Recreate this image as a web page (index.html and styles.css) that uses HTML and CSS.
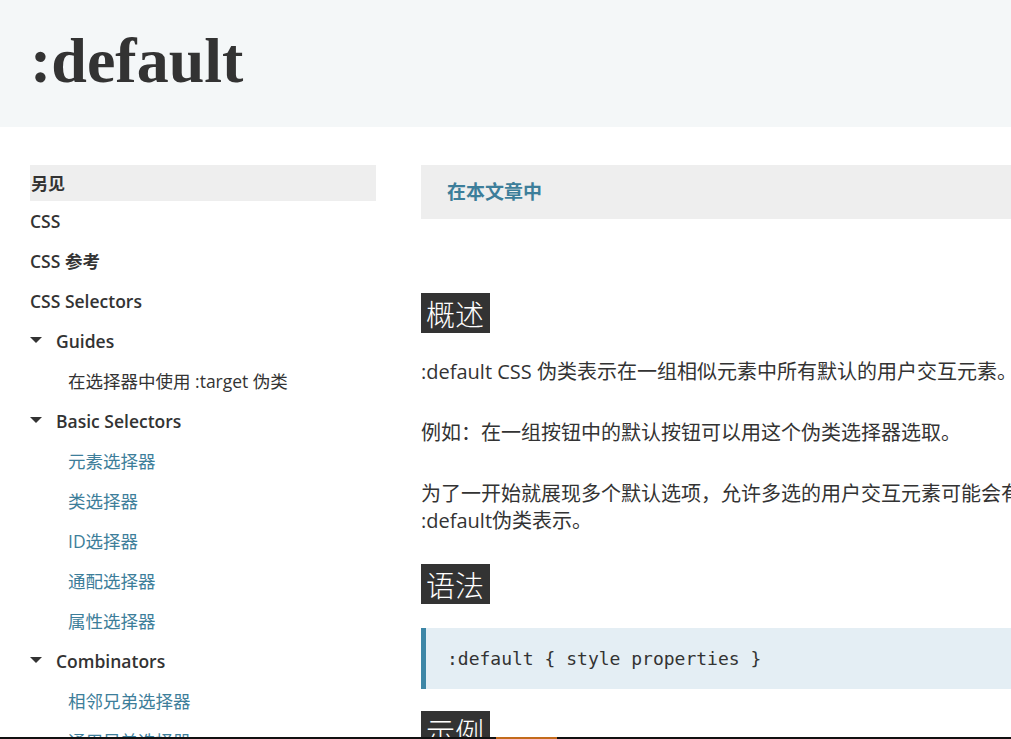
FILE: index.html
```html
<!DOCTYPE html>
<html lang="zh-CN">
<head>
<meta charset="utf-8">
<title>:default</title>
<link rel="stylesheet" href="styles.css">
</head>
<body>
<header class="page-header">
  <h1 class="title">:default</h1>
</header>
<div class="layout">
  <aside class="sidebar">
    <div class="side-heading">另见</div>
    <ul class="side-list">
      <li class="top">CSS</li>
      <li class="top">CSS 参考</li>
      <li class="top">CSS Selectors</li>
      <li class="group"><span class="tri"></span>Guides</li>
      <li class="sub dark">在选择器中使用 :target 伪类</li>
      <li class="group"><span class="tri"></span>Basic Selectors</li>
      <li class="sub">元素选择器</li>
      <li class="sub">类选择器</li>
      <li class="sub">ID选择器</li>
      <li class="sub">通配选择器</li>
      <li class="sub">属性选择器</li>
      <li class="group"><span class="tri"></span>Combinators</li>
      <li class="sub">相邻兄弟选择器</li>
      <li class="sub">通用兄弟选择器</li>
    </ul>
  </aside>
  <main class="content">
    <div class="toc">在本文章中</div>
    <h2 class="sec">概述</h2>
    <p class="para">:default CSS 伪类表示在一组相似元素中所有默认的用户交互元素。</p>
    <p class="para">例如：在一组按钮中的默认按钮可以用这个伪类选择器选取。</p>
    <p class="para">为了一开始就展现多个默认选项，允许多选的用户交互元素可能会有多个项被<wbr>:default伪类表示。</p>
    <h2 class="sec">语法</h2>
    <pre class="code">:default { style properties }</pre>
    <h2 class="sec">示例</h2>
  </main>
</div>
<div class="bottom-bar"><span class="bottom-accent"></span></div>
</body>
</html>
```

FILE: styles.css
```css
html, body {
  margin: 0;
  padding: 0;
}
body {
  font-family: "Open Sans", "Noto Sans CJK SC", sans-serif;
  color: #333;
  background: #fff;
  overflow: hidden;
}
.page-header {
  background: #f4f7f8;
  height: 127px;
  box-sizing: border-box;
  padding: 29px 30px 0;
}
.title {
  margin: 0;
  font-family: "Liberation Serif", serif;
  font-weight: 700;
  font-size: 64px;
  line-height: 64px;
  color: #333;
}
.layout {
  display: flex;
  gap: 45px;
  padding: 38px 0 0 30px;
  overflow: hidden;
}
.sidebar {
  flex: 0 0 346px;
}
.side-heading {
  background: #eee;
  height: 36px;
  line-height: 38px;
  font-weight: 700;
  font-size: 17px;
  padding-left: 1px;
}
.side-list {
  list-style: none;
  margin: 0;
  padding: 0;
}
.side-list li {
  height: 40px;
  line-height: 41px;
  font-size: 17.5px;
  white-space: nowrap;
}
.side-list li.top {
  font-weight: 600;
}
.side-list li.group {
  font-weight: 600;
  display: flex;
  align-items: center;
}
.tri {
  width: 0;
  height: 0;
  border-left: 6px solid transparent;
  border-right: 6px solid transparent;
  border-top: 6px solid #333;
  margin-right: 14px;
  margin-top: -2px;
}
.side-list li.sub {
  padding-left: 38px;
  color: #3d7e9a;
  font-size: 17.5px;
  font-weight: 400;
}
.side-list li.sub.dark {
  color: #333;
}
.content {
  flex: 0 0 720px;
}
.toc {
  background: #eee;
  height: 54px;
  line-height: 54px;
  padding-left: 26px;
  width: 720px;
  font-weight: 700;
  font-size: 19px;
  color: #3d7e9a;
}
.sec {
  display: inline-block;
  margin: 74px 0 0;
  background: #333;
  color: #fff;
  font-family: "Noto Sans CJK SC", sans-serif;
  font-weight: 300;
  font-size: 29px;
  line-height: 40px;
  height: 40px;
  padding: 0 6px 0 5px;
}
.para {
  margin: 25px 0 0;
  font-size: 20px;
  line-height: 27px;
  width: 700px;
}
.para + .para {
  margin-top: 34px;
}
.para + .sec {
  margin-top: 30px;
}
.code {
  margin: 24px 0 0;
  background: #e4eef4;
  border-left: 5px solid #3d86a6;
  width: 720px;
  height: 61px;
  box-sizing: border-box;
  padding-left: 21px;
  line-height: 61px;
  font-family: "DejaVu Sans Mono", monospace;
  font-size: 18px;
  color: #333;
}
.code + .sec {
  margin-top: 22px;
}
.bottom-bar {
  position: fixed;
  left: 0;
  right: 0;
  bottom: 0;
  height: 2px;
  background: #111;
}
.bottom-accent {
  position: absolute;
  left: 496px;
  top: 0;
  width: 61px;
  height: 2px;
  background: #c36b1c;
}
```
